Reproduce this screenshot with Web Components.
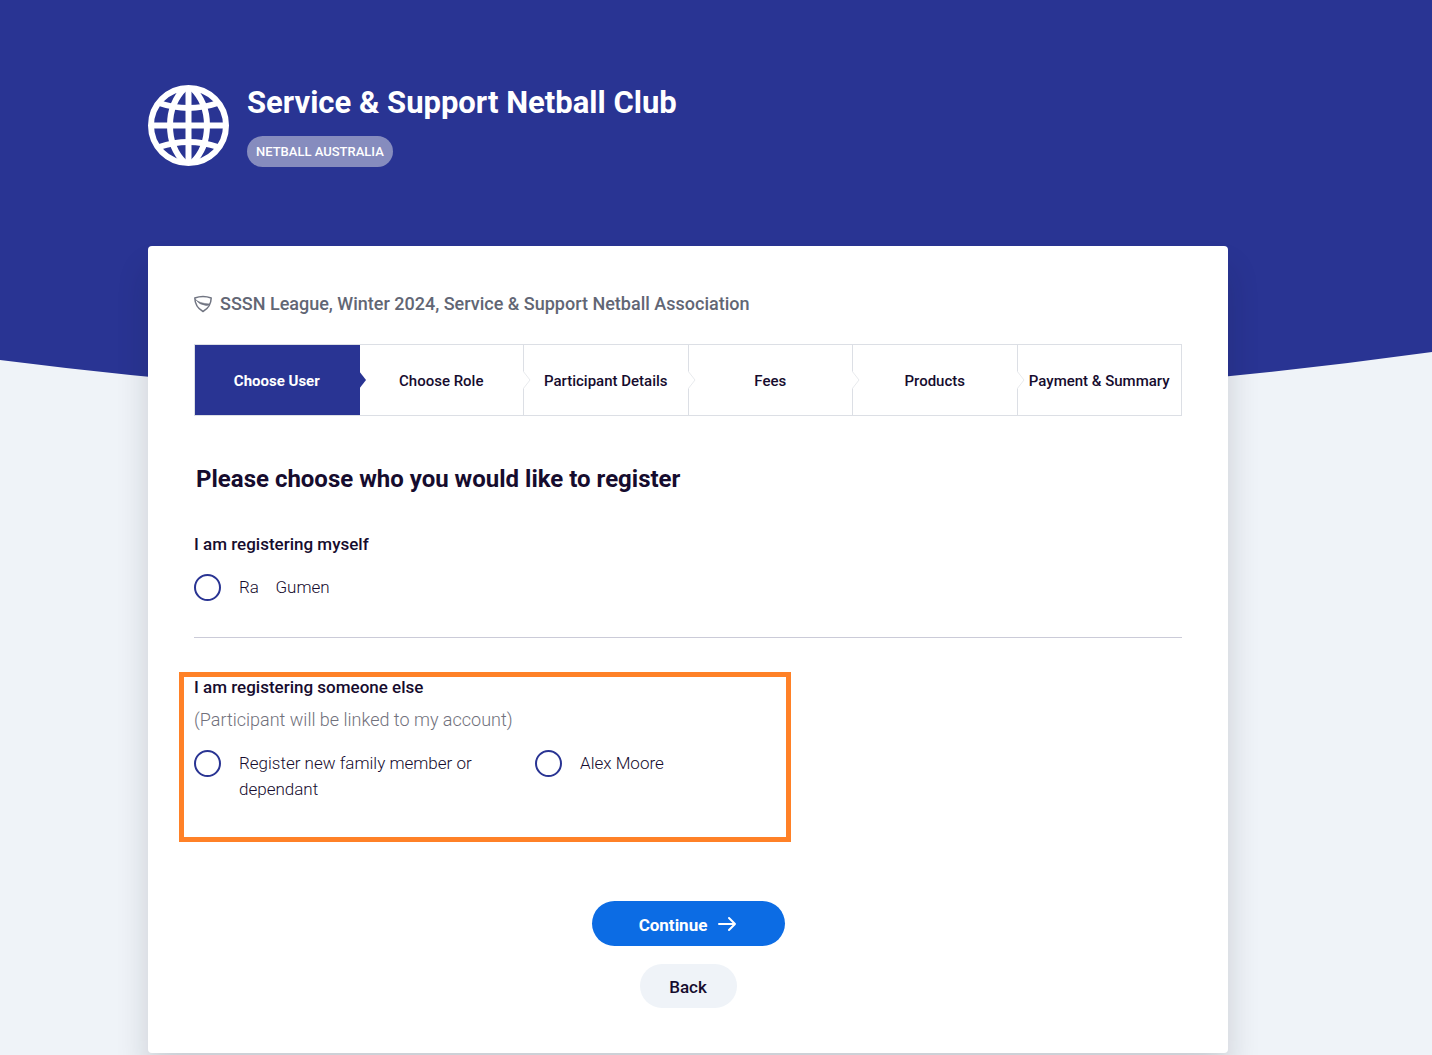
<!DOCTYPE html>
<html lang="en">
<head>
<meta charset="utf-8">
<meta name="viewport" content="width=device-width, initial-scale=1">
<title>Service &amp; Support Netball Club - Registration</title>
<style>
  :root { --navy: #293493; --ink: #160c2e; --grey: #626674; --mist: #eff3f8; --line: #dcdfe5; --blue: #0c6ce4; }
  body { margin: 0; background: var(--mist); color: var(--ink); font-family: Roboto, "Liberation Sans", sans-serif; }
</style>
</head>
<body>
<registration-page>
  <club-header slot="header" badge="NETBALL AUSTRALIA">Service &amp; Support Netball Club</club-header>
  <content-card>
    <league-line>SSSN League, Winter 2024, Service &amp; Support Netball Association</league-line>
    <step-bar>
      <step-item current>Choose User</step-item>
      <step-item>Choose Role</step-item>
      <step-item>Participant Details</step-item>
      <step-item>Fees</step-item>
      <step-item>Products</step-item>
      <step-item>Payment &amp; Summary</step-item>
    </step-bar>
    <user-chooser></user-chooser>
  </content-card>
</registration-page>

<script>
const define = (name, html) => customElements.define(name, class extends HTMLElement {
  constructor() {
    super();
    const template = document.createElement('template');
    template.innerHTML = html;
    this.attachShadow({ mode: 'open' }).append(template.content.cloneNode(true));
  }
  connectedCallback() {
    const badge = this.shadowRoot.querySelector('.badge');
    if (badge) badge.textContent = this.getAttribute('badge');
  }
});

define('registration-page', `
  <style>
    :host { display: block; position: relative; }
    .backdrop { position: absolute; inset: 0 0 auto; width: 100%; height: 460px; z-index: -1; }
    .column { max-width: 1080px; padding: 85px 204px 2px 148px; }
    main { margin-top: 79px; }
  </style>
  <svg class="backdrop" viewBox="0 0 1432 460" preserveAspectRatio="none" aria-hidden="true">
    <path d="M0 0H1432V352Q716 451 0 360Z" fill="#293493"/>
  </svg>
  <div class="column">
    <slot name="header"></slot>
    <main><slot></slot></main>
  </div>`);

define('club-header', `
  <style>
    :host { display: block; color: #fff; }
    header { display: flex; gap: 18px; }
    svg { width: 81px; height: 81px; flex: none; }
    .text { display: flex; flex-direction: column; align-items: flex-start; justify-content: space-between; height: 82px; }
    h1 { margin: 0; font-size: 31px; line-height: 36px; font-weight: 700; }
    .badge { padding: 0 9px; border-radius: 16px; background: #868cbe; font-size: 13px; line-height: 31px; font-weight: 500; }
  </style>
  <header>
    <svg viewBox="0 0 81 81" fill="none" stroke="#fff" stroke-width="6" aria-hidden="true">
      <circle cx="40.5" cy="40.5" r="37.5"/>
      <path d="M40.5 3V78M3 40.5H78"/>
      <path d="M37 3C17 22 17 59 37 78M44 3C64 22 64 59 44 78"/>
      <path d="M11 18Q40.5 28 70 18M11 62Q40.5 52 70 62"/>
    </svg>
    <div class="text"><h1><slot></slot></h1><span class="badge"></span></div>
  </header>`);

define('content-card', `
  <style>
    :host { display: block; box-sizing: border-box; padding: 45px 46px; background: #fff; border-radius: 4px;
      box-shadow: 0 24px 32px rgba(20, 24, 32, .16); }
  </style>
  <slot></slot>`);

define('league-line', `
  <style>
    :host { display: flex; align-items: center; gap: 8px; color: var(--grey); font-size: 18px; line-height: 26px; font-weight: 500; }
    svg { width: 18px; height: 18px; flex: none; }
  </style>
  <svg viewBox="0 0 18 18" fill="none" stroke="#717582" stroke-width="1.5" stroke-linejoin="round" aria-hidden="true">
    <path d="M.8 3Q9 0 17.2 3Q17 12 9 16.5Q1 12 .8 3Z"/>
    <path d="M1 4Q5 8.500 16 9Q14 11 12 10.500Q5 9.500 2 5Z" fill="#717582" stroke-width=".5"/>
  </svg>
  <span><slot></slot></span>`);

define('step-bar', `
  <style>
    :host { display: block; margin-top: 27px; }
    nav { display: flex; border: 1px solid var(--line); }
  </style>
  <nav aria-label="Registration steps"><slot></slot></nav>`);

define('step-item', `
  <style>
    :host { display: flex; flex: 1 1 0; box-sizing: border-box; min-width: 0; height: 70px; position: relative;
      align-items: center; justify-content: center; border-right: 1px solid var(--line); padding-top: 2px;
      font-size: 15px; font-weight: 500; white-space: nowrap; }
    :host(:last-child) { border-right: 0; }
    :host([current]) { background: var(--navy); border-color: var(--navy); color: #fff; font-weight: 700; }
    svg { position: absolute; left: 100%; top: 26px; width: 8px; height: 18px; z-index: 1; fill: #fff; stroke: #e8eaee; }
    :host([current]) svg { fill: var(--navy); stroke: none; }
    :host(:last-child) svg { display: none; }
  </style>
  <slot></slot>
  <svg viewBox="0 0 8 18" aria-hidden="true"><path d="M0 0L7 9L0 18"/></svg>`);

define('user-chooser', `
  <style>
    :host { display: block; }
    h2 { margin: 45px 0 0 2px; font-size: 24px; line-height: 36px; font-weight: 700; }
    fieldset { margin: 0; padding: 0; border: 0; min-width: 0; }
    legend { padding: 0; font-size: 17px; line-height: 24px; font-weight: 500; }
    .self { margin-top: 35px; padding-bottom: 36px; border-bottom: 1px solid #cbcbd8; }
    .options { display: grid; grid-template-columns: 286px 1fr; column-gap: 55px; align-items: start; }
    label { display: flex; gap: 18px; font-size: 17px; line-height: 26px; font-weight: 300; white-space: pre-wrap; }
    .self label { margin-top: 18px; }
    input { appearance: none; box-sizing: border-box; flex: none; width: 27px; height: 27px; margin: 0;
      border: 2px solid var(--navy); border-radius: 50%; background: #fff; }
    input:checked { background: radial-gradient(var(--navy) 45%, #fff 50%); }
    .marked { box-sizing: border-box; max-width: 612px; height: 170px; margin: 34px 0 0 -15px; padding: 0 10px;
      border: 5px solid #ff8127; }
    .marked legend { line-height: 20px; }
    .note { margin: 10px 0 17px; color: #71717c; font-size: 18px; line-height: 26px; font-weight: 300; }
    .actions { display: flex; flex-direction: column; align-items: center; gap: 18px; margin-top: 59px; }
    button { display: flex; align-items: center; justify-content: center; border: 0; border-radius: 23px; padding: 2px 0 0;
      font: 500 17px/24px Roboto, "Liberation Sans", sans-serif; color: var(--ink); background: var(--mist); cursor: pointer; }
    .next { gap: 10px; width: 193px; height: 45px; color: #fff; background: var(--blue); font-weight: 700; }
    .next svg { margin-bottom: 2px; }
    .back { width: 97px; height: 44px; }
  </style>
  <form>
    <h2>Please choose who you would like to register</h2>
    <fieldset class="self">
      <legend>I am registering myself</legend>
      <label for="self"><input type="radio" name="user" id="self"><span>Ra    Gumen</span></label>
    </fieldset>
    <div class="marked">
      <fieldset>
        <legend>I am registering someone else</legend>
        <p class="note">(Participant will be linked to my account)</p>
        <div class="options">
          <label for="new"><input type="radio" name="user" id="new"><span>Register new family member or dependant</span></label>
          <label for="alex"><input type="radio" name="user" id="alex"><span>Alex Moore</span></label>
        </div>
      </fieldset>
    </div>
    <div class="actions">
      <button class="next" type="button">Continue
        <svg width="20" height="18" viewBox="0 0 20 18" fill="none" stroke="#fff" stroke-width="2" stroke-linecap="round" stroke-linejoin="round" aria-hidden="true"><path d="M2 9H18M12 3L18 9L12 15"/></svg>
      </button>
      <button class="back" type="button">Back</button>
    </div>
  </form>`);
</script>
</body>
</html>
